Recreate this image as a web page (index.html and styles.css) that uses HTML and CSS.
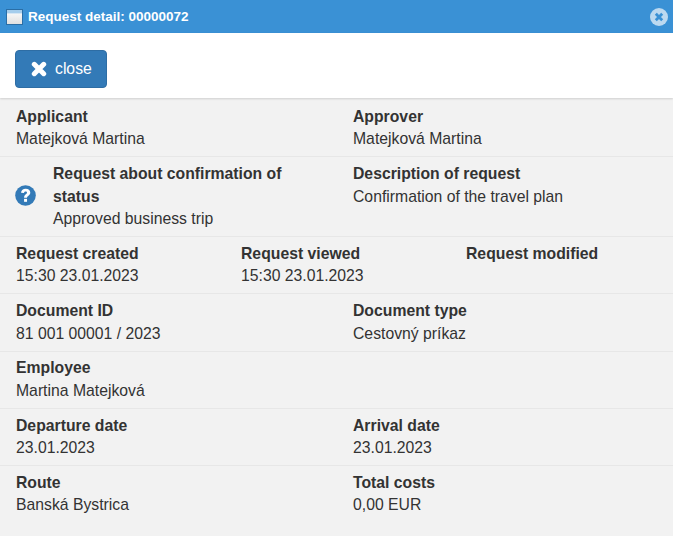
FILE: index.html
```html
<!DOCTYPE html>
<html lang="en">
<head>
<meta charset="utf-8">
<title>Request detail</title>
<link rel="stylesheet" href="styles.css">
</head>
<body>
<header class="titlebar">
  <svg class="win-icon" width="17" height="16" viewBox="0 0 17 16">
    <defs><linearGradient id="wg" x1="0" y1="0" x2="0" y2="1"><stop offset="0" stop-color="#fff"/><stop offset="1" stop-color="#dfdfdf"/></linearGradient></defs>
    <rect x="0.500" y="0.500" width="16" height="15" fill="url(#wg)" stroke="#2a6ea6"/>
    <rect x="1" y="1" width="15" height="3" fill="#a5cdec"/>
    <rect x="1" y="4" width="15" height="1" fill="#d6e6f3"/>
  </svg>
  <span class="title">Request detail: 00000072</span>
  <svg class="win-close" width="18" height="18" viewBox="0 0 18 18">
    <circle cx="9" cy="9" r="9" fill="#bcd9f0"/>
    <path d="M5.800 5.800l6.400 6.400M12.200 5.800l-6.400 6.400" stroke="#3a91d5" stroke-width="2.800" fill="none"/>
  </svg>
</header>
<div class="toolbar">
  <button class="btn" type="button">
    <svg width="16" height="16" viewBox="0 0 16 16"><path d="M3.300 3.300l9.400 9.400M12.700 3.300l-9.400 9.400" stroke="#fff" stroke-width="5" fill="none" stroke-linecap="round"/></svg>
    <span>close</span>
  </button>
</div>
<main class="detail">
  <section class="row two">
    <div><b>Applicant</b><p>Matejková Martina</p></div>
    <div><b>Approver</b><p>Matejková Martina</p></div>
  </section>
  <section class="row two">
    <div class="with-icon">
      <svg class="q-icon" width="21" height="21" viewBox="0 0 22 22">
        <circle cx="11" cy="11" r="10.800" fill="#337ab7"/>
        <path d="M6.300 8.200C6.600 5.400 8.500 3.900 11.200 3.900c2.800 0 4.800 1.700 4.800 4 0 1.800-1 2.700-2.200 3.500-.9.600-1.200 1-1.200 2H9.500c0-2 .6-2.900 1.800-3.800.9-.6 1.300-1 1.300-1.600 0-.8-.6-1.300-1.500-1.300-1 0-1.600.6-1.700 1.600z" fill="#fff"/>
        <rect x="9.500" y="14.500" width="3.100" height="3.100" fill="#fff"/>
      </svg>
      <div><b>Request about confirmation of status</b><p>Approved business trip</p></div>
    </div>
    <div><b>Description of request</b><p>Confirmation of the travel plan</p></div>
  </section>
  <section class="row three">
    <div><b>Request created</b><p>15:30 23.01.2023</p></div>
    <div><b>Request viewed</b><p>15:30 23.01.2023</p></div>
    <div><b>Request modified</b></div>
  </section>
  <section class="row two">
    <div><b>Document ID</b><p>81 001 00001 / 2023</p></div>
    <div><b>Document type</b><p>Cestovný príkaz</p></div>
  </section>
  <section class="row two">
    <div><b>Employee</b><p>Martina Matejková</p></div>
  </section>
  <section class="row two">
    <div><b>Departure date</b><p>23.01.2023</p></div>
    <div><b>Arrival date</b><p>23.01.2023</p></div>
  </section>
  <section class="row two">
    <div><b>Route</b><p>Banská Bystrica</p></div>
    <div><b>Total costs</b><p>0,00 EUR</p></div>
  </section>
</main>
</body>
</html>
```
FILE: styles.css
```css
* { box-sizing: border-box; }
html, body { margin: 0; height: 100%; }
body {
  background: #f2f2f2;
  color: #333;
  font: 15.75px/22.5px "Liberation Sans", Arial, sans-serif;
  overflow: hidden;
}
.titlebar {
  height: 33px;
  background: #3a91d5;
  color: #fff;
  display: flex;
  align-items: center;
  padding: 0 5px 0 6px;
}
.win-icon { flex: none; margin-top: 1px; margin-right: 5px; }
.title { font-size: 13.5px; font-weight: bold; flex: 1; padding-top: 1px; }
.toolbar {
  height: 65px;
  background: #fff;
  padding: 17px 15px 0;
  box-shadow: 0 1px 2px rgba(0, 0, 0, .15);
  position: relative;
}
.btn {
  width: 92px;
  height: 38px;
  background: #337ab7;
  border: 1px solid #2e6da4;
  border-radius: 4px;
  color: #fff;
  font: inherit;
  display: flex;
  align-items: center;
  padding: 0 0 0 15px;
  gap: 8px;
}
.detail { padding-top: 2px; }
.row {
  display: grid;
  padding: 5.750px 0 5.500px 16px;
  border-bottom: 1px solid #e7e7e7;
}
.row:last-child { border-bottom: 0; }
.two { grid-template-columns: 337px 320px; }
.three { grid-template-columns: 225px 225px 207px; }
b { font-weight: bold; display: block; }
p { margin: 0; }
.with-icon { display: flex; align-items: center; padding-right: 40px; }
.q-icon { flex: none; margin: -2px 17px 0 -1px; }
```
